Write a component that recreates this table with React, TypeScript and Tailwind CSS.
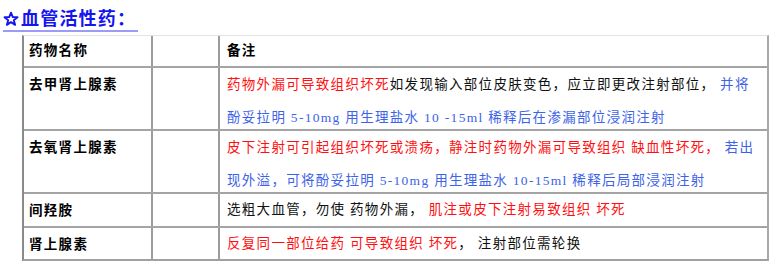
import React from "react";

const R = "text-[#ff1010]";
const B = "text-[#3d63e8]";
const K = "text-[#111]";

const font = { fontFamily: '"Liberation Serif", "Noto Sans CJK SC", serif' };

type Row = {
  name: string;
  h: string;
  lines: { c: string; t: string }[][];
};

const rows: Row[] = [
  {
    name: "去甲肾上腺素",
    h: "h-[63px]",
    lines: [
      [
        { c: R, t: "药物外漏可导致组织坏死" },
        { c: K, t: "如发现输入部位皮肤变色，应立即更改注射部位，" },
        { c: B, t: " 并将" },
      ],
      [{ c: B, t: "酚妥拉明 5-10mg 用生理盐水 10 -15ml 稀释后在渗漏部位浸润注射" }],
    ],
  },
  {
    name: "去氧肾上腺素",
    h: "h-[63px]",
    lines: [
      [
        { c: R, t: "皮下注射可引起组织坏死或溃疡，静注时药物外漏可导致组织 缺血性坏死，" },
        { c: B, t: " 若出" },
      ],
      [{ c: B, t: "现外溢，可将酚妥拉明 5-10mg 用生理盐水 10-15ml 稀释后局部浸润注射" }],
    ],
  },
  {
    name: "间羟胺",
    h: "h-[34px]",
    lines: [
      [
        { c: K, t: "选粗大血管，勿使 药物外漏，" },
        { c: R, t: " 肌注或皮下注射易致组织 坏死" },
      ],
    ],
  },
  {
    name: "肾上腺素",
    h: "h-[31px]",
    lines: [
      [
        { c: R, t: "反复同一部位给药 可导致组织 坏死" },
        { c: K, t: "， 注射部位需轮换" },
      ],
    ],
  },
];

// outline star like the bold ☆ in the heading
const Star = () => (
  <svg width="16" height="16" viewBox="0 0 24 24" className="mr-[2px] shrink-0">
    <polygon
      points="12,2.5 14.7,9.2 21.8,9.4 16.2,13.8 18.2,20.8 12,16.7 5.8,20.8 7.8,13.8 2.2,9.4 9.3,9.2"
      fill="none"
      stroke="#1414f0"
      strokeWidth="2.8"
      strokeLinejoin="round"
    />
  </svg>
);

export default function App() {
  return (
    <div className="w-[776px] h-[261px] bg-white overflow-hidden" style={font}>
      <div className="pl-[3px] pt-[9px] h-[35px]">
        <span className="inline-flex items-center text-[18px] leading-[20px] font-bold tracking-[1.2px] text-[#1414f0] border-b-[2px] border-[#9a9cf8] pb-[1px] pr-[2px]">
          <Star />
          血管活性药：
        </span>
      </div>

      <div className="ml-[22px] w-[747px] border-l-2 border-r-2 border-b-2 border-t border-l-[#8a8a8a] border-r-[#a8a8a8] border-b-[#a0a0a0] border-t-[#e2e2e2] text-[13.5px] tracking-[1.3px]">
        <div className="flex h-[32px] border-b-2 border-[#a4a4a4] font-bold text-black">
          <div className="w-[129px] border-r-2 border-[#9c9c9c] pl-[5px] pt-[1px] flex items-center">药物名称</div>
          <div className="w-[67px] border-r-2 border-[#9c9c9c]" />
          <div className="flex-1 pl-[7px] pt-[1px] flex items-center">备注</div>
        </div>

        {rows.map((r, i) => (
          <div
            key={r.name}
            className={`flex ${r.h} ${i < rows.length - 1 ? "border-b-2 border-[#a4a4a4]" : ""}`}
          >
            <div className="w-[129px] border-r-2 border-[#9c9c9c] pl-[5px] font-bold text-black leading-[33px] whitespace-nowrap">
              {r.name}
            </div>
            <div className="w-[67px] border-r-2 border-[#9c9c9c]" />
            <div className="flex-1 pl-[7px] leading-[33px] whitespace-nowrap">
              {r.lines.map((ln, j) => (
                <div key={j} className={r.lines.length > 1 ? "" : "leading-[31px]"}>
                  {ln.map((s, k) => (
                    <span key={k} className={s.c}>
                      {s.t}
                    </span>
                  ))}
                </div>
              ))}
            </div>
          </div>
        ))}
      </div>
    </div>
  );
}
